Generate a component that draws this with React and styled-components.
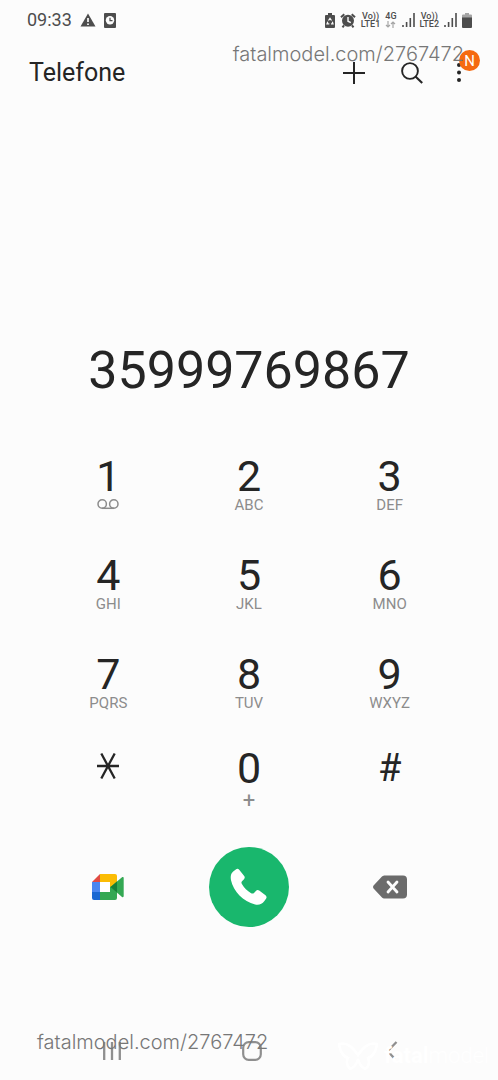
import React, { useState } from 'react'
import styled, { createGlobalStyle } from 'styled-components'

const GlobalStyle = createGlobalStyle`
  * {
    box-sizing: border-box;
  }
  body {
    margin: 0;
    background: #fcfcfc;
    color: #252525;
    font-family: Roboto, 'Liberation Sans', sans-serif;
  }
  svg {
    display: block;
    flex: none;
  }
`

const Screen = styled.div`
  position: relative;
  display: flex;
  flex-direction: column;
  min-height: 100vh;
  overflow: hidden;
`

const StatusBar = styled.div`
  display: flex;
  align-items: center;
  justify-content: space-between;
  height: 40px;
  padding: 0 26px 0 27px;
  color: #4d4d4d;
`

const StatusGroup = styled.div`
  display: flex;
  align-items: center;
  gap: ${props => props.$gap}px;
`

const Time = styled.span`
  font-size: 18px;
  line-height: 22px;
`

const Network = styled.span`
  display: flex;
  flex-direction: column;
  align-items: center;
  font-size: 9px;
  font-weight: 500;
  line-height: 8px;
`

const Header = styled.header`
  display: flex;
  align-items: center;
  justify-content: space-between;
  height: 66px;
  padding: 0 27px 0 29px;
`

const Title = styled.h1`
  margin: 0;
  font-size: 25px;
  font-weight: 400;
  line-height: 30px;
`

const Tools = styled.div`
  display: flex;
  align-items: center;
  gap: 12px;
`

const IconButton = styled.button`
  position: relative;
  display: flex;
  align-items: center;
  justify-content: center;
  padding: 0;
  border: 0;
  background: none;
  color: inherit;
  font-family: inherit;
  cursor: pointer;
`

const ToolButton = styled(IconButton)`
  width: ${props => (props.$narrow ? 24 : 46)}px;
`

const Badge = styled.span`
  position: absolute;
  left: 12px;
  top: -12px;
  width: 21px;
  height: 21px;
  border-radius: 50%;
  background: #f56a10;
  color: #fff;
  font-size: 15px;
  line-height: 22px;
  text-align: center;
`

const Dialed = styled.output`
  display: block;
  padding: 235px 16px 54px;
  font-size: 52px;
  line-height: 60px;
  text-align: center;
`

const Keypad = styled.div`
  display: grid;
  grid-template-columns: repeat(3, 1fr);
  grid-template-rows: 99px 99px 94px 65px;
  padding: 0 38px;
`

const Key = styled.button`
  display: flex;
  flex-direction: column;
  align-items: center;
  padding: 0;
  border: 0;
  background: none;
  color: inherit;
  font-family: inherit;
  cursor: pointer;
`

const Digit = styled.span`
  display: flex;
  align-items: center;
  height: 42px;
  font-size: ${props => (props.$symbol ? 38 : 43)}px;
  line-height: ${props => (props.$symbol ? 38 : 42)}px;
`

const Letters = styled.span`
  display: flex;
  align-items: center;
  height: ${props => (props.$big ? 31 : 16)}px;
  color: #8c8c8c;
  font-size: ${props => (props.$big ? 22 : 15)}px;
  line-height: 16px;
`

const Actions = styled.div`
  display: grid;
  grid-template-columns: repeat(3, 1fr);
  align-items: center;
  justify-items: center;
  padding: 35px 38px;
`

const CallButton = styled(IconButton)`
  width: 80px;
  height: 80px;
  border-radius: 50%;
  background: #19b76d;
  color: #fff;
`

const NavBar = styled.nav`
  display: grid;
  grid-template-columns: repeat(3, 1fr);
  align-items: center;
  justify-items: center;
  height: 58px;
  margin-top: auto;
  padding: 0 36px 0 42px;
  color: #8f8f8f;
`

const Watermark = styled.span`
  position: absolute;
  ${props => (props.$top ? 'top: 42px; right: 34px;' : 'bottom: 26px; left: 37px;')}
  color: #777;
  font-family: Inter, Roboto, sans-serif;
  font-size: 20px;
  font-weight: 300;
  line-height: 24px;
  pointer-events: none;
`

const Brand = styled.span`
  position: absolute;
  right: 9px;
  bottom: 10px;
  display: flex;
  align-items: center;
  gap: 6px;
  color: #fff;
  font-size: 22px;
  font-weight: 300;
  line-height: 28px;
  pointer-events: none;
  b {
    font-weight: 700;
  }
`

const Warning = () => (
  <svg width="16" height="14" viewBox="0 0 16 14">
    <path d="M8 .5 15.5 13.5H.5Z" fill="currentColor" />
    <path d="M8 5v4M8 10.5v1.5" stroke="#fcfcfc" strokeWidth="1.7" />
  </svg>
)

const ClockCard = () => (
  <svg width="12" height="15" viewBox="0 0 12 15">
    <rect width="12" height="15" rx="1" fill="currentColor" />
    <circle cx="6" cy="7.3" r="4.2" fill="#fcfcfc" />
    <path d="M6 4.8v2.8h2.5" fill="none" stroke="currentColor" strokeWidth="1.2" />
  </svg>
)

const BatterySaver = () => (
  <svg width="10" height="15" viewBox="0 0 10 15">
    <path d="M3 0h4v2h2a1 1 0 0 1 1 1v11a1 1 0 0 1-1 1H1a1 1 0 0 1-1-1V3a1 1 0 0 1 1-1h2Z" fill="currentColor" />
    <path d="M3.5 7.5 5 5.3l1.5 2.2M7.3 8.7 8 10.8H6M4.3 10.8H2L2.8 8.7" fill="none" stroke="#fcfcfc" strokeWidth="1.2" />
  </svg>
)

const Alarm = () => (
  <svg width="16" height="15" viewBox="0 0 16 15">
    <path d="M1 4.3 4.3 1.2M15 4.3 11.7 1.2M4 12.3 2.5 14.3M12 12.3l1.5 2" stroke="currentColor" strokeWidth="2" />
    <circle cx="8" cy="7.7" r="6" fill="currentColor" />
    <path d="M8 4v4.2l2.8 1.4" fill="none" stroke="#fcfcfc" strokeWidth="1.4" />
  </svg>
)

const DataArrows = () => (
  <svg width="11" height="8" viewBox="0 0 11 8">
    <path d="M3 1v6M1 5l2 2 2-2M8 8V2M6 4l2-2 2 2" fill="none" stroke="#a5a5a5" strokeWidth="1.2" />
  </svg>
)

const Signal = () => (
  <svg width="13" height="14" viewBox="0 0 13 14">
    <path d="M1 12v2M4.6 9v5M8.3 5v9M12 0v14" stroke="currentColor" strokeWidth="1.6" />
  </svg>
)

const Battery = () => (
  <svg width="10" height="15" viewBox="0 0 10 15">
    <path d="M3 0h4v1.5h2a1 1 0 0 1 1 1V5H0V2.5a1 1 0 0 1 1-1h2Z" fill="#a5a5a5" />
    <path d="M0 4.5h10V14a1 1 0 0 1-1 1H1a1 1 0 0 1-1-1Z" fill="currentColor" />
  </svg>
)

const Plus = () => (
  <svg width="22" height="22" viewBox="0 0 22 22">
    <path d="M11 0v22M0 11h22" stroke="currentColor" strokeWidth="2" />
  </svg>
)

const Search = () => (
  <svg width="22" height="22" viewBox="0 0 22 22">
    <circle cx="9" cy="9" r="7.9" fill="none" stroke="currentColor" strokeWidth="1.9" />
    <path d="m14.500 14.500 6.700 6.600" stroke="currentColor" strokeWidth="2.1" />
  </svg>
)

const Dots = () => (
  <svg width="10" height="22" viewBox="0 0 10 22">
    <g fill="currentColor">
      <circle cx="5" cy="3" r="2" />
      <circle cx="5" cy="10.500" r="2" />
      <circle cx="5" cy="18" r="2" />
    </g>
  </svg>
)

const Voicemail = () => (
  <svg width="22" height="13" viewBox="0 0 22 13">
    <g fill="none" stroke="currentColor" strokeWidth="1.500">
      <circle cx="5.200" cy="5" r="4.200" />
      <circle cx="16.800" cy="5" r="4.200" />
      <path d="M5 9.300h12" />
    </g>
  </svg>
)

const Star = () => (
  <svg width="22" height="32" viewBox="0 0 22 32">
    <path d="M0 14h22M4.300 1.500l13.400 25M17.700 1.500l-13.400 25" stroke="currentColor" strokeWidth="2.300" />
  </svg>
)

const Meet = () => (
  <svg width="32" height="26" viewBox="0 0 32 26">
    <path d="M8 0v8H0Z" fill="#e14b42" />
    <path d="M8 0h15a2 2 0 0 1 2 2v9l-7 5V8H8Z" fill="#fbbc04" />
    <path d="M0 8h8v10H0Z" fill="#4a86f0" />
    <path d="M0 18h8v8H2a2 2 0 0 1-2-2Z" fill="#1967d2" />
    <path d="M8 18h10v-5l7-2v13a2 2 0 0 1-2 2H8Z" fill="#34a853" />
    <path d="M18.500 13 30 3.300c.8-.6 1.700-.2 1.700.8v18c0 1-.9 1.400-1.700.8Z" fill="#34a853" />
    <path d="M18.500 13 25 7.500v11Z" fill="#188038" />
    <path d="M8 8h10v10H8Z" fill="#fff" />
  </svg>
)

const Phone = () => (
  <svg width="38" height="38" viewBox="0 0 38 38">
    <path
      d="M3.200 3.500 5.800 1.400C7 .5 8.300.7 9.200 1.800l5 6.300c.8 1 .7 2.200-.2 3.100l-2 2c-.8.8-.7 1.800-.1 2.900 2.200 3.900 5.300 7 9.200 9.100 1.100.6 2.100.5 2.900-.3l1.900-2c.9-1 2.200-1.100 3.300-.3l6.300 4.700c1.200.9 1.400 2.200.5 3.400l-1.800 2.500c-2 2.900-5.300 4-9.100 3.200C13.300 33.800 3.300 23.200 1 12.200.3 8.500.8 5.500 3.200 3.500Z"
      fill="currentColor"
    />
  </svg>
)

const Backspace = () => (
  <svg width="34" height="24" viewBox="0 0 34 24">
    <path
      d="M12 .5h18a4 4 0 0 1 4 4v15a4 4 0 0 1-4 4H12c-1.500 0-2.500-.5-3.500-1.500L.8 13.800c-1-1-1-2.600 0-3.600L8.500 2c1-1 2-1.500 3.500-1.500Z"
      fill="#6b6b6b"
    />
    <path d="m15 7 9 10M24 7l-9 10" stroke="#fcfcfc" strokeWidth="2.800" strokeLinecap="round" />
  </svg>
)

const Recents = () => (
  <svg width="18" height="20" viewBox="0 0 18 20">
    <path d="M1.200 1v18M9 1v18M16.800 1v18" stroke="currentColor" strokeWidth="2.300" />
  </svg>
)

const Home = () => (
  <svg width="20" height="20" viewBox="0 0 20 20">
    <rect x="1.200" y="1.200" width="17.600" height="17.600" rx="5.500" fill="none" stroke="currentColor" strokeWidth="2.200" />
  </svg>
)

const Back = () => (
  <svg width="12" height="20" viewBox="0 0 12 20">
    <path d="M10.500 1 1.800 10l7 8" fill="none" stroke="currentColor" strokeWidth="2.300" />
  </svg>
)

const Butterfly = () => (
  <svg width="40" height="28" viewBox="0 0 40 28">
    <path
      d="M1 2c9-2 14 4 19 11C25 6 30 0 39 2c-1 7-3 12-9 14 2 5 0 9-3 11-4-2-6-6-7-10-1 4-3 8-8 10-3-3-4-7-2-11C4 14 2 9 1 2Z"
      fill="none"
      stroke="currentColor"
      strokeWidth="2.500"
    />
  </svg>
)

const keys = [
  { value: '1', icon: <Voicemail /> },
  { value: '2', letters: 'ABC' },
  { value: '3', letters: 'DEF' },
  { value: '4', letters: 'GHI' },
  { value: '5', letters: 'JKL' },
  { value: '6', letters: 'MNO' },
  { value: '7', letters: 'PQRS' },
  { value: '8', letters: 'TUV' },
  { value: '9', letters: 'WXYZ' },
  { value: '*', drawn: <Star /> },
  { value: '0', letters: '+' },
  { value: '#' }
]

function App() {
  const [number, setNumber] = useState('35999769867')

  return (
    <>
      <GlobalStyle />
      <Screen>
        <StatusBar>
          <StatusGroup $gap={8}>
            <Time>09:33</Time>
            <Warning />
            <ClockCard />
          </StatusGroup>
          <StatusGroup $gap={5}>
            <BatterySaver />
            <Alarm />
            <Network><span>Vo))</span><span>LTE1</span></Network>
            <Network><span>4G</span><DataArrows /></Network>
            <Signal />
            <Network><span>Vo))</span><span>LTE2</span></Network>
            <Signal />
            <Battery />
          </StatusGroup>
        </StatusBar>

        <Header>
          <Title>Telefone</Title>
          <Tools>
            <ToolButton aria-label="Adicionar"><Plus /></ToolButton>
            <ToolButton aria-label="Pesquisar"><Search /></ToolButton>
            <ToolButton $narrow aria-label="Mais opções">
              <Dots />
              <Badge>N</Badge>
            </ToolButton>
          </Tools>
        </Header>

        <main>
          <Dialed>{number}</Dialed>
          <Keypad>
            {keys.map(key => (
              <Key key={key.value} aria-label={key.value} onClick={() => setNumber(number + key.value)}>
                <Digit $symbol={key.value === '#'}>{key.drawn || key.value}</Digit>
                <Letters $big={key.letters === '+'}>{key.icon || key.letters}</Letters>
              </Key>
            ))}
          </Keypad>
          <Actions>
            <IconButton aria-label="Chamada de vídeo"><Meet /></IconButton>
            <CallButton aria-label="Ligar"><Phone /></CallButton>
            <IconButton aria-label="Apagar" onClick={() => setNumber(number.slice(0, -1))}>
              <Backspace />
            </IconButton>
          </Actions>
        </main>

        <NavBar>
          <IconButton aria-label="Recentes"><Recents /></IconButton>
          <IconButton aria-label="Início"><Home /></IconButton>
          <IconButton aria-label="Voltar"><Back /></IconButton>
        </NavBar>

        <Watermark $top>fatalmodel.com/2767472</Watermark>
        <Watermark>fatalmodel.com/2767472</Watermark>
        <Brand>
          <Butterfly />
          <span><b>fatal</b>model</span>
        </Brand>
      </Screen>
    </>
  )
}

export default App
